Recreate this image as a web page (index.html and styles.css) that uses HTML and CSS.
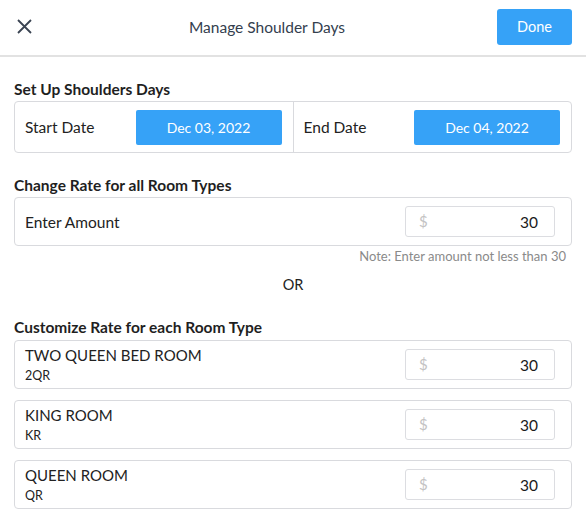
FILE: index.html
```html
<!DOCTYPE html>
<html>
<head>
<meta charset="utf-8">
<link rel="stylesheet" href="styles.css">
</head>
<body>
<header class="topbar">
  <div class="close">
    <svg width="15" height="15" viewBox="0 0 15 15"><path d="M1 1L14 14M14 1L1 14" stroke="#3a4452" stroke-width="1.8" fill="none"/></svg>
  </div>
  <div class="title">Manage Shoulder Days</div>
  <button class="done">Done</button>
</header>
<main class="content">
  <h2 class="sec first">Set Up Shoulders Days</h2>
  <div class="box dates">
    <div class="half">
      <span class="label">Start Date</span>
      <span class="datebtn">Dec 03, 2022</span>
    </div>
    <div class="half right">
      <span class="label">End Date</span>
      <span class="datebtn">Dec 04, 2022</span>
    </div>
  </div>

  <h2 class="sec">Change Rate for all Room Types</h2>
  <div class="box row">
    <span class="label">Enter Amount</span>
    <div class="amount"><span class="cur">$</span><span class="val">30</span></div>
  </div>
  <div class="note">Note: Enter amount not less than 30</div>
  <div class="or">OR</div>

  <h2 class="sec third">Customize Rate for each Room Type</h2>
  <div class="list">
    <div class="box row room">
      <div class="names"><div class="rname">TWO QUEEN BED ROOM</div><div class="code">2QR</div></div>
      <div class="amount"><span class="cur">$</span><span class="val">30</span></div>
    </div>
    <div class="box row room">
      <div class="names"><div class="rname">KING ROOM</div><div class="code">KR</div></div>
      <div class="amount"><span class="cur">$</span><span class="val">30</span></div>
    </div>
    <div class="box row room">
      <div class="names"><div class="rname">QUEEN ROOM</div><div class="code">QR</div></div>
      <div class="amount"><span class="cur">$</span><span class="val">30</span></div>
    </div>
  </div>
</main>
</body>
</html>
```

FILE: styles.css
```css
* { box-sizing: border-box; }
html, body { margin: 0; padding: 0; background: #fff; }
body {
  font-family: Lato, "Open Sans", sans-serif;
  color: #222;
  width: 586px;
}
.topbar {
  height: 57px;
  display: flex;
  align-items: center;
  padding: 0 14px 0 17px;
  border-bottom: 2px solid #e2e2e2;
}
.close { width: 20px; display: flex; align-items: center; margin-top: -2px; }
.title {
  flex: 1;
  text-align: center;
  font-size: 15.5px;
  color: #34404e;
  margin-top: -2px;
}
.done {
  width: 75px;
  height: 36px;
  border: none;
  border-radius: 3px;
  background: #36a2f7;
  color: #fff;
  font-family: Lato, sans-serif;
  font-size: 14.5px;
  margin-top: -2px;
}
.content { padding: 0 14px; }
.sec {
  font-size: 15.5px;
  font-weight: bold;
  margin: 22px 0 2px;
  line-height: 20px;
  color: #1f1f1f;
}
.sec.third { margin-top: 23px; margin-bottom: 3px; }
.box {
  border: 1px solid #d9dade;
  border-radius: 4px;
}
.dates {
  display: flex;
  height: 52px;
}
.half {
  flex: 1;
  display: flex;
  align-items: center;
  justify-content: space-between;
  padding: 0 11px 0 10px;
}
.half.right { border-left: 1px solid #d9dade; padding-right: 11px; }
.label { font-size: 15.5px; color: #222; }
.datebtn {
  width: 146px;
  height: 35px;
  background: #36a2f7;
  color: #fff;
  border-radius: 2px;
  display: flex;
  align-items: center;
  justify-content: center;
  font-size: 14px;
}
.row {
  height: 49px;
  display: flex;
  align-items: center;
  justify-content: space-between;
  padding: 0 16px 0 10px;
}
.amount {
  width: 150px;
  height: 31px;
  border: 1px solid #dcdde1;
  border-radius: 3px;
  display: flex;
  align-items: center;
  justify-content: space-between;
  padding: 0 16px 0 13px;
}
.cur { color: #c3c3c3; font-size: 15px; margin-top: -2px; }
.val { font-size: 15.5px; color: #1b1b1b; }
.note {
  text-align: right;
  font-size: 13px;
  color: #8a8a8a;
  margin-top: 3px;
  padding-right: 6px;
  line-height: 14px;
}
.or {
  text-align: center;
  font-size: 14.5px;
  margin-top: 13px;
  line-height: 18px;
}
.list { display: flex; flex-direction: column; gap: 11px; }
.room { align-items: center; }
.names { display: flex; flex-direction: column; margin-top: -1px; }
.rname { font-size: 15px; line-height: 20px; color: #222; }
.code { font-size: 12.5px; line-height: 16px; color: #222; margin-top: 3px; }
```
